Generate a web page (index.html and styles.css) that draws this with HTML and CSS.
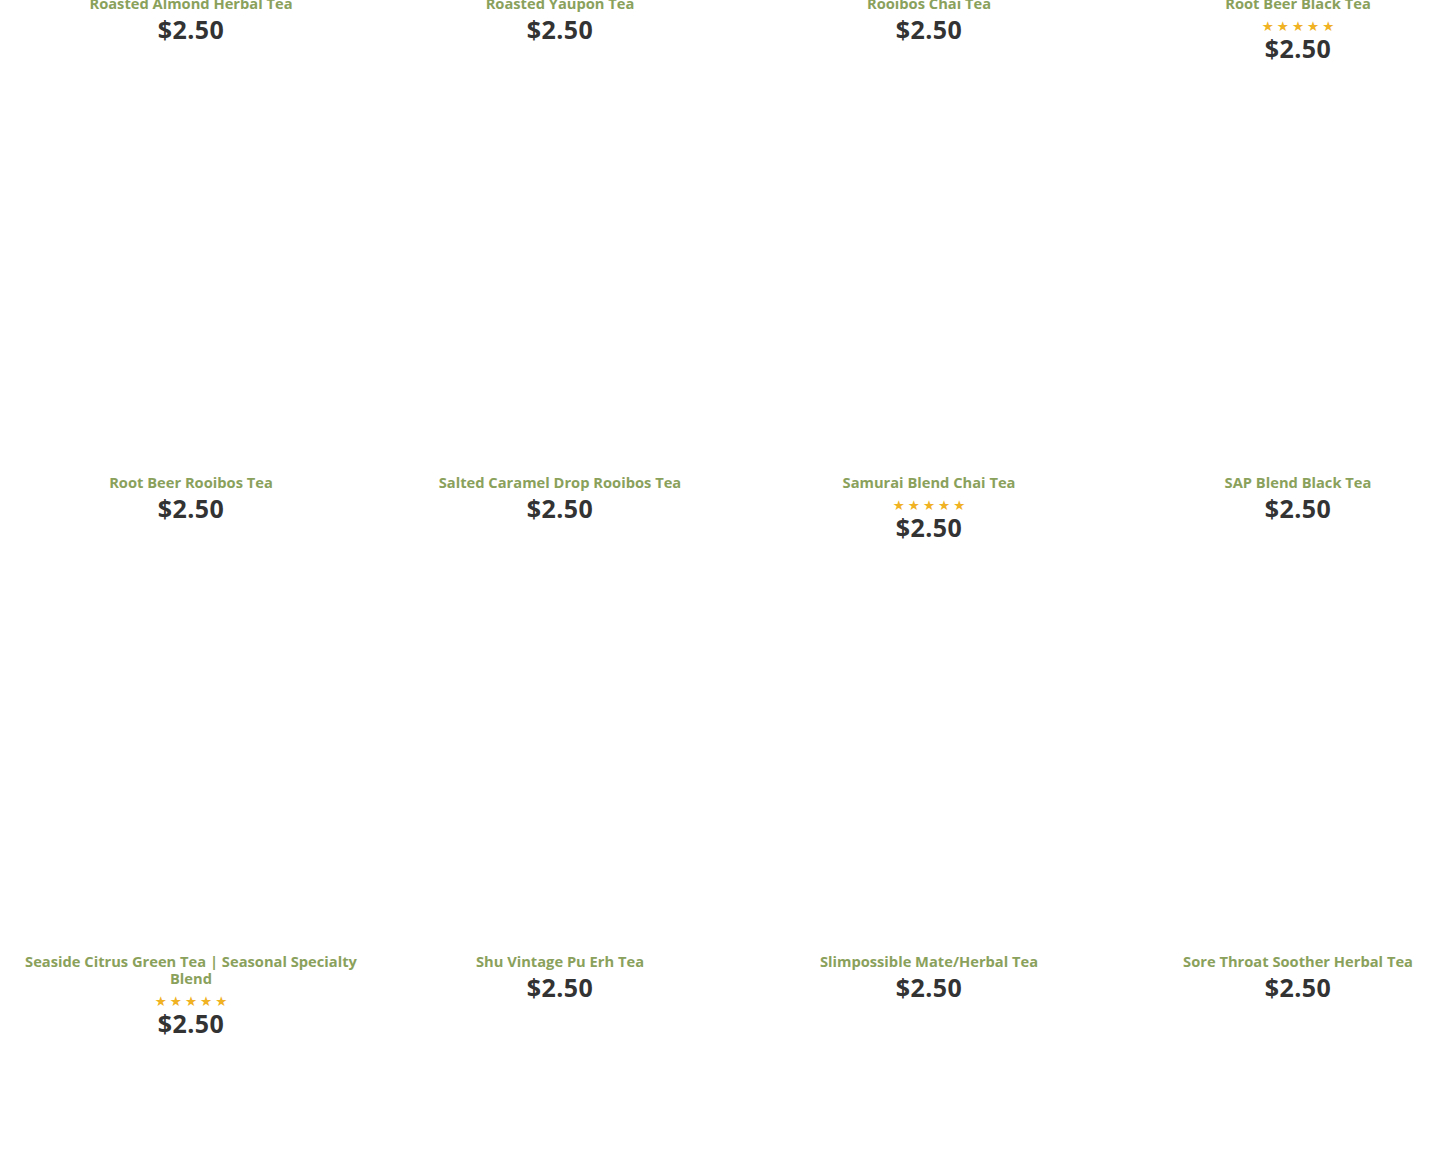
FILE: index.html
```html
<!DOCTYPE html>
<html lang="en">
<head>
<meta charset="utf-8">
<title>Teas</title>
<link rel="stylesheet" href="styles.css">
</head>
<body>
<main class="grid">
  <div class="card"><div class="thumb"></div><a class="title">Roasted Almond Herbal Tea</a><div class="price">$2.50</div></div>
  <div class="card"><div class="thumb"></div><a class="title">Roasted Yaupon Tea</a><div class="price">$2.50</div></div>
  <div class="card"><div class="thumb"></div><a class="title">Rooibos Chai Tea</a><div class="price">$2.50</div></div>
  <div class="card"><div class="thumb"></div><a class="title">Root Beer Black Tea</a><div class="stars">★★★★★</div><div class="price">$2.50</div></div>

  <div class="card"><div class="thumb"></div><a class="title">Root Beer Rooibos Tea</a><div class="price">$2.50</div></div>
  <div class="card"><div class="thumb"></div><a class="title">Salted Caramel Drop Rooibos Tea</a><div class="price">$2.50</div></div>
  <div class="card"><div class="thumb"></div><a class="title">Samurai Blend Chai Tea</a><div class="stars">★★★★★</div><div class="price">$2.50</div></div>
  <div class="card"><div class="thumb"></div><a class="title">SAP Blend Black Tea</a><div class="price">$2.50</div></div>

  <div class="card"><div class="thumb"></div><a class="title">Seaside Citrus Green Tea | Seasonal Specialty Blend</a><div class="stars">★★★★★</div><div class="price">$2.50</div></div>
  <div class="card"><div class="thumb"></div><a class="title">Shu Vintage Pu Erh Tea</a><div class="price">$2.50</div></div>
  <div class="card"><div class="thumb"></div><a class="title">Slimpossible Mate/Herbal Tea</a><div class="price">$2.50</div></div>
  <div class="card"><div class="thumb"></div><a class="title">Sore Throat Soother Herbal Tea</a><div class="price">$2.50</div></div>
</main>
</body>
</html>
```
FILE: styles.css
```css
html {
  overflow: hidden;
}
html, body {
  margin: 0;
  padding: 0;
  background: #fff;
}
body {
  font-family: "Open Sans", "DejaVu Sans", sans-serif;
}
.grid {
  display: grid;
  grid-template-columns: repeat(4, 350px);
  grid-auto-rows: 479px;
  column-gap: 19px;
  padding-left: 16px;
  padding-bottom: 177px;
  margin-top: -450px;
  width: 1500px;
}
.card {
  display: flex;
  flex-direction: column;
  align-items: center;
  text-align: center;
}
.thumb {
  height: 445px;
  width: 100%;
  flex: none;
}
.title {
  display: block;
  max-width: 336px;
  font-size: 14.7px;
  line-height: 17px;
  font-weight: 700;
  color: #8aa15c;
}
.stars {
  margin-top: 7px;
  font-family: "DejaVu Sans", sans-serif;
  font-size: 13.5px;
  line-height: 15px;
  letter-spacing: 3px;
  padding-left: 3px;
  color: #f0b123;
}
.price {
  margin-top: 2px;
  font-size: 25px;
  line-height: 24px;
  font-weight: 700;
  letter-spacing: 0.4px;
  color: #333;
}
.title + .price {
  margin-top: 5px;
}
```
